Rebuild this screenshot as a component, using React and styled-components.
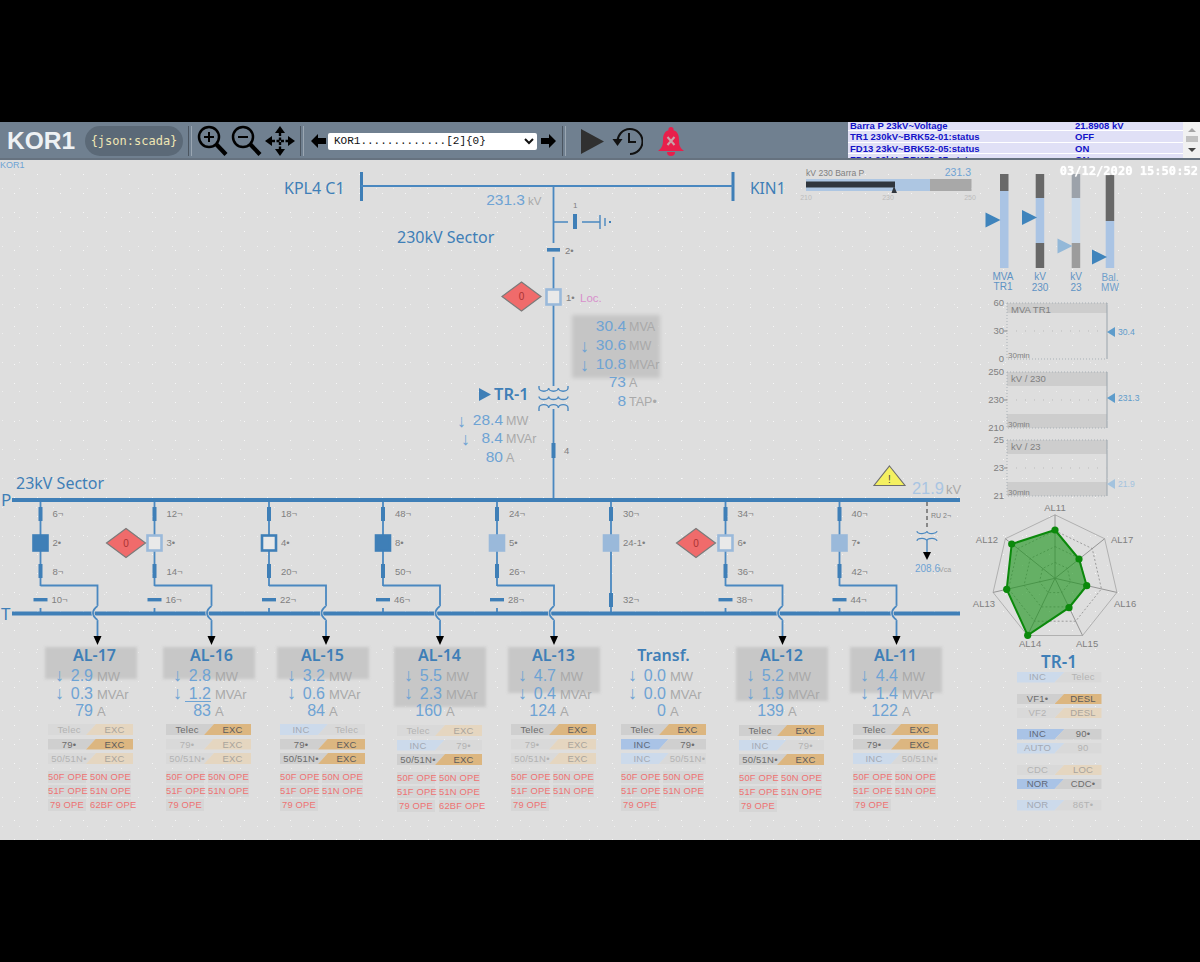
import React from "react"
import styled, { createGlobalStyle } from "styled-components"

const BLUE = "#3f7fb7"
const LINE = "#4a88c0"
const PALE = "#9ab9da"
const NUM = "#6ea3d4"
const GREY = "#a9a9a9"

const Global = createGlobalStyle`
    html, body { margin: 0; padding: 0; background: #000; }
    body { font-family: "Liberation Sans", Arial, sans-serif; }
`

const Page = styled.div`
    width: 1200px;
    height: 962px;
    padding-top: 122px;
    box-sizing: border-box;
    background: #000;
    overflow: hidden;
`
const Screen = styled.div`
    width: 1200px;
    height: 718px;
    display: flex;
    flex-direction: column;
    filter: blur(0.4px);
`

/* toolbar */
const Toolbar = styled.div`
    height: 38px;
    flex: none;
    display: flex;
    align-items: center;
    background: #708090;
    box-shadow: inset 0 -2px 0 #66727f;
`
const Brand = styled.div`
    width: 85px;
    padding-left: 7px;
    box-sizing: border-box;
    color: #eef2f4;
    font-size: 24.5px;
    font-weight: 700;
`
const Pill = styled.div`
    width: 98px;
    height: 30px;
    border-radius: 15px;
    background: #5b6977;
    color: #efe6b4;
    font: 12px "DejaVu Sans Mono", monospace;
    display: flex;
    align-items: center;
    justify-content: center;
`
const Sep = styled.div`
    width: 2px;
    height: 30px;
    margin: 0 ${p => p.$after}px 0 ${p => p.$before}px;
    border-left: 1px solid #4b5560;
    border-right: 1px solid #9aa6b2;
`
const Tool = styled.button`
    flex: none;
    padding: 0;
    border: none;
    background: none;
    display: flex;
    margin-left: ${p => p.$ml || 0}px;
`
const StationSelect = styled.select`
    width: 209px;
    height: 17px;
    margin-left: 2px;
    padding: 0 0 0 2px;
    border: none;
    border-radius: 2px;
    background: #fff;
    color: #111;
    font: 11px "Liberation Mono", monospace;
`
const Events = styled.div`
    margin-left: auto;
    width: 352px;
    height: 36px;
    align-self: flex-start;
    display: flex;
    overflow: hidden;
`
const EventRows = styled.div`
    flex: 1;
    margin-top: -2px;
    background: #fff;
`
const EventRow = styled.div`
    height: 10.3px;
    margin-bottom: 1px;
    padding-left: 2px;
    display: grid;
    grid-template-columns: 225px 1fr;
    align-items: center;
    background: #e0e0f6;
    color: #1313c8;
    font-size: 9.5px;
    font-weight: 700;
    white-space: nowrap;
`
const Scrollbar = styled.div`
    width: 17px;
    flex: none;
    background: #f1f1f1;
    display: flex;
    flex-direction: column;
    align-items: center;
    padding-top: 6px;
    box-sizing: border-box;
`
const ScrollArrow = styled.div`
    width: 0;
    height: 0;
    border-left: 4px solid transparent;
    border-right: 4px solid transparent;
    ${p => p.$down ? "border-top: 4px solid #444;" : "border-bottom: 4px solid #a5a5a5;"}
`
const ScrollThumb = styled.div`
    width: 12px;
    height: 6px;
    margin: 4px 0 6px;
    background: #c1c1c1;
`

/* canvas */
const Canvas = styled.div`
    position: relative;
    flex: 1;
    display: grid;
    grid-template-columns: 960px 240px;
    background-color: #dedede;
    background-image:
        radial-gradient(circle, rgba(255,255,255,.75) .6px, transparent 1px),
        radial-gradient(circle, rgba(255,255,255,.5) .6px, transparent 1px);
    background-size: 23px 19px, 17px 29px;
    background-position: 3px 5px, 11px 14px;
`
const Clock = styled.div`
    position: absolute;
    top: 4px;
    right: 2px;
    color: #fff;
    font: 700 12.1px "DejaVu Sans Mono", monospace;
    text-shadow: 0 0 1px #fff;
`
const Main = styled.div`
    display: flex;
    flex-direction: column;
    min-width: 0;
`
const Side = styled.div`
    display: flex;
    flex-direction: column;
    min-width: 0;
`
const Drawing = styled.svg`
    display: block;
    flex: none;
    overflow: visible;
`

/* svg text */
const Caption = styled.text`
    font-family: "Noto Sans", sans-serif;
    font-size: ${p => p.$size || 15}px;
    font-weight: ${p => p.$weight || 500};
    fill: ${BLUE};
`
const Num = styled.text`
    font-size: ${p => p.$size || 15.5}px;
    fill: ${p => p.$fill || NUM};
    text-anchor: end;
`
const Unit = styled.text`
    font-size: ${p => p.$size || 12.5}px;
    fill: ${GREY};
`
const Small = styled.text`
    font-size: ${p => p.$size || 9.5}px;
    fill: ${p => p.$fill || "#808080"};
    text-anchor: ${p => p.$anchor || "start"};
`

function Measure({ x, y, value, unit, arrow }){
    return(
        <g>
            {arrow !== undefined && <Num x={arrow + 6} y={y + 2} $size={18}>↓</Num>}
            <Num x={x} y={y}>{value}</Num>
            <Unit x={x + 3} y={y}>{unit}</Unit>
        </g>
    )
}

function Trip({ cx, cy }){
    return(
        <g>
            <polygon
                points={`${cx - 19.5},${cy} ${cx},${cy - 14.5} ${cx + 19.5},${cy} ${cx},${cy + 14.5}`}
                fill="#f06b6b" stroke="#7b7b7b" strokeWidth="1.2"
            />
            <Small x={cx} y={cy + 3.5} $anchor="middle" $size={10} $fill="#a33">0</Small>
        </g>
    )
}

function Breaker({ x, y, kind }){
    const filled = kind === "dark" || kind === "light"
    const colour = kind === "dark" || kind === "darkOpen" ? BLUE : PALE
    return <rect
        x={x - 7} y={y - 7.5} width="14" height="15"
        fill={filled ? colour : "#e9e9e9"} stroke={colour} strokeWidth="2.6"
    />
}

const bays = [
    { x: 40.5, top: "6¬", brk: "2•", kind: "dark", low: "8¬", by: "10¬" },
    { x: 154.5, top: "12¬", brk: "3•", kind: "lightOpen", low: "14¬", by: "16¬", trip: 126 },
    { x: 269, top: "18¬", brk: "4•", kind: "darkOpen", low: "20¬", by: "22¬" },
    { x: 383, top: "48¬", brk: "8•", kind: "dark", low: "50¬", by: "46¬" },
    { x: 497, top: "24¬", brk: "5•", kind: "light", low: "26¬", by: "28¬" },
    { x: 611, top: "30¬", brk: "24-1•", kind: "light", low: "32¬" },
    { x: 725.5, top: "34¬", brk: "6•", kind: "lightOpen", low: "36¬", by: "38¬", trip: 696 },
    { x: 839.5, top: "40¬", brk: "7•", kind: "light", low: "42¬", by: "44¬" },
]

function Bay({ bay }){
    const { x, by } = bay
    const out = x + 57
    return(
        <g>
            {by ? (
                <>
                    <path d={`M${x} 500 V586`} stroke={LINE} strokeWidth="1.8" fill="none" />
                    <rect x={x - 7} y={598} width="14" height="3.4" fill={BLUE} />
                    <path d={`M${x} 608 V613`} stroke={LINE} strokeWidth="1.8" />
                    <path d={`M${x} 585.5 H${out} V606 M${out} 620 V637`} stroke={LINE} strokeWidth="1.8" fill="none" />
                    <polygon points={`${out - 4},636 ${out + 4},636 ${out},645`} fill="#000" />
                    <Small x={x + 11} y={603} $size={9.5}>{by}</Small>
                </>
            ) : (
                <>
                    <path d={`M${x} 500 V613`} stroke={LINE} strokeWidth="1.8" />
                    <rect x={x - 2} y={593} width="4" height="14" fill={BLUE} />
                    <Small x={x + 12} y={603}>{bay.low}</Small>
                </>
            )}
            <rect x={x - 2} y={507} width="4" height="14" fill={BLUE} />
            <Breaker x={x} y={543} kind={bay.kind} />
            {by && <rect x={x - 2} y={564} width="4" height="14" fill={BLUE} />}
            <Small x={x + 12} y={517}>{bay.top}</Small>
            <Small x={x + 12} y={546}>{bay.brk}</Small>
            {by && <Small x={x + 12} y={575}>{bay.low}</Small>}
            {bay.trip && <Trip cx={bay.trip} cy={543} />}
        </g>
    )
}

function Diagram(){
    return(
        <Drawing width="960" height="485" viewBox="0 160 960 485">
            <Small x={0} y={168} $size={9} $fill={NUM}>KOR1</Small>

            {/* 230kV side */}
            <rect x="360" y="172" width="3" height="29" fill={BLUE} />
            <rect x="731.5" y="172" width="3" height="29" fill={BLUE} />
            <path d="M361 186 H733" stroke={LINE} strokeWidth="1.8" />
            <Caption x={284} y={194} $size={16} $weight={400}>KPL4 C1</Caption>
            <Caption x={750} y={194} $size={15.5} $weight={400}>KIN1</Caption>
            <Num x={525} y={205} $size={15.5}>231.3</Num>
            <Unit x={528} y={205} $size={11.5}>kV</Unit>
            <Caption x={397} y={243} $size={16} $weight={400}>230kV Sector</Caption>

            <path d="M553.5 186 V243 M553.5 257 V386 M553.5 409 V500" stroke={LINE} strokeWidth="1.8" fill="none" />
            <path d="M553.5 222 H568 M582 222 H600 M600 215 V229 M605 218 V226" stroke={LINE} strokeWidth="1.4" fill="none" />
            <rect x="573" y="214" width="4" height="15" fill={BLUE} />
            <rect x="609" y="221" width="2" height="2" fill={BLUE} />
            <Small x={573} y={208} $size={8}>1</Small>
            <rect x="547" y="248" width="13" height="3.6" fill={BLUE} />
            <Small x={565} y={254}>2•</Small>

            <Breaker x={553.5} y={297} kind="lightOpen" />
            <Trip cx={521.5} cy={296.5} />
            <Small x={566} y={301}>1•</Small>
            <Small x={580} y={302} $size={11.5} $fill="#d890cc">Loc.</Small>

            <rect x="572" y="315" width="88" height="63" fill="#c5c5c5" filter="url(#fuzz)" />
            <Measure x={626} y={331} value="30.4" unit="MVA" />
            <Measure x={626} y={350} value="30.6" unit="MW" arrow={583} />
            <Measure x={626} y={369} value="10.8" unit="MVAr" arrow={583} />
            <Measure x={626} y={387} value="73" unit="A" />
            <Measure x={626} y={406} value="8" unit="TAP•" />

            <path
                d="M539 386 v2 a4.83 3.2 0 0 0 9.67 0 a4.83 3.2 0 0 0 9.67 0 a4.83 3.2 0 0 0 9.67 0 v-2
                   M539 396.5 a4.83 3 0 0 0 9.67 0 a4.83 3 0 0 0 9.67 0 a4.83 3 0 0 0 9.67 0
                   M539 411 v-3 a4.83 3.4 0 0 1 9.67 0 a4.83 3.4 0 0 1 9.67 0 a4.83 3.4 0 0 1 9.67 0 v3"
                stroke={LINE} strokeWidth="1.4" fill="none"
            />
            <polygon points="479,388 491,394.5 479,401" fill={BLUE} />
            <Caption x={494} y={400} $size={16.5} $weight={600}>TR-1</Caption>
            <Measure x={503} y={425} value="28.4" unit="MW" arrow={460} />
            <Measure x={503} y={443} value="8.4" unit="MVAr" arrow={464} />
            <Measure x={503} y={462} value="80" unit="A" />
            <rect x="551.5" y="443" width="4" height="15" fill={BLUE} />
            <Small x={564} y={454}>4</Small>

            {/* 23kV side */}
            <Caption x={16} y={489} $size={16} $weight={400}>23kV Sector</Caption>
            <Caption x={1} y={506} $size={17} $weight={400}>P</Caption>
            <Caption x={1} y={620} $size={17} $weight={400}>T</Caption>
            <polygon points="889.5,466 905,485.5 874,485.5" fill="#f4f061" stroke="#6d6d6d" strokeWidth="1.1" />
            <Small x={889.5} y={483} $anchor="middle" $size={10} $fill="#444">!</Small>
            <Num x={944} y={494} $size={16.5} $fill="#a9c5e2">21.9</Num>
            <Unit x={946} y={494} $size={13}>kV</Unit>

            {bays.map(b => <Bay key={b.x} bay={b} />)}

            <rect x="12" y="498" width="948" height="4" fill={BLUE} />
            <rect x="12" y="611.5" width="948" height="4" fill={BLUE} />
            {/* hops sit over the T bus */}
            {bays.filter(b => b.by).map(b => (
                <path key={b.x} d={`M${b.x + 57} 606 Q${b.x + 48} 613 ${b.x + 57} 620`} stroke="#dedede" strokeWidth="3.2" fill="none" />
            ))}
            {bays.filter(b => b.by).map(b => (
                <path key={b.x} d={`M${b.x + 57} 606 Q${b.x + 48} 613 ${b.x + 57} 620`} stroke={LINE} strokeWidth="1.8" fill="none" />
            ))}

            {/* aux transformer */}
            <path d="M927 502 V530" stroke="#333" strokeWidth="1" strokeDasharray="4 3" />
            <path d="M927 541 V552" stroke={LINE} strokeWidth="1.4" />
            <path
                d="M917 531 a5 2.6 0 0 0 10 0 a5 2.6 0 0 0 10 0 M917 541 a5 2.6 0 0 1 10 0 a5 2.6 0 0 1 10 0"
                stroke={LINE} strokeWidth="1.1" fill="none"
            />
            <polygon points="923,552 931,552 927,560" fill="#000" />
            <Small x={931} y={518} $size={7}>RU 2¬</Small>
            <Small x={915} y={572} $size={10} $fill={NUM}>208.6</Small>
            <Small x={939} y={572} $size={7} $fill="#a0a0a0">Vca</Small>

            {/* horizontal level bar */}
            <Small x={806} y={176} $size={8.6}>kV 230 Barra P</Small>
            <Small x={971} y={176} $anchor="end" $size={10.5} $fill={NUM}>231.3</Small>
            <rect x="806" y="179" width="124" height="12" fill="#adc6e2" />
            <rect x="930" y="179" width="41.5" height="12" fill="#a8a8a8" />
            <rect x="806" y="181.5" width="89" height="6" fill="#30363d" />
            <polygon points="894,186 891.5,193 897,193" fill="#30363d" />
            <Small x={806} y={199.5} $anchor="middle" $size={7} $fill="#bcbcbc">210</Small>
            <Small x={888} y={199.5} $anchor="middle" $size={7} $fill="#bcbcbc">230</Small>
            <Small x={970} y={199.5} $anchor="middle" $size={7} $fill="#bcbcbc">250</Small>

            <defs>
                <filter id="fuzz" x="-10%" y="-10%" width="120%" height="120%">
                    <feGaussianBlur stdDeviation="2" />
                </filter>
            </defs>
        </Drawing>
    )
}

/* feeder cards */
const Feeders = styled.div`
    flex: 1;
    display: flex;
    align-items: flex-start;
    padding-left: 48px;
`
const Card = styled.div`
    position: relative;
    flex: none;
    width: 85px;
    margin-left: ${p => p.$gap}px;
`
const Shade = styled.div`
    position: absolute;
    left: -3px;
    right: -4px;
    top: 2px;
    height: ${p => p.$h}px;
    background: #c7c7c7;
    filter: blur(1.6px);
`
const FeederTitle = styled.div`
    position: relative;
    height: 21px;
    line-height: 21px;
    text-align: center;
    padding-left: ${p => p.$shift * 2}px;
    color: ${BLUE};
    font: 600 16px/21px "Noto Sans", sans-serif;
`
const MeasureRow = styled.div`
    position: relative;
    height: 18px;
    display: grid;
    grid-template-columns: 23px 22px 1fr;
    align-items: baseline;
    column-gap: 0;
    font-size: 16px;
    line-height: 18px;
`
const Arrow = styled.span`
    color: ${NUM};
    font-size: 18px;
    text-align: center;
`
const Val = styled.span`
    color: ${NUM};
    text-align: right;
    white-space: nowrap;
    direction: rtl;
`
const Uom = styled.span`
    color: ${GREY};
    font-size: 13px;
    padding-left: 4px;
`
const Strike = styled.div`
    position: absolute;
    left: 19px;
    top: -1px;
    width: 26px;
    height: 1px;
    background: ${NUM};
`
const Tags = styled.div`
    display: flex;
    flex-direction: column;
    gap: 3.5px;
    margin-top: ${p => 4 + (p.$drop || 0)}px;
`
const tone = {
    grey: ["#cfcfcf", "#6c6c6c"],
    dim: ["#d9d9d9", "#b3b3b3"],
    orange: ["#dcb680", "#5c5c5c"],
    peach: ["#e5d6c0", "#a9a49c"],
    blue: ["#a9c3e6", "#5f6878"],
    pale: ["#ccdaeb", "#a3a9b3"],
}
const Pair = styled.div`
    display: flex;
    height: ${p => p.$h || 11}px;
    width: 85px;
    font-size: 9.5px;
    letter-spacing: .2px;
    line-height: ${p => p.$h || 11}px;
`
const Half = styled.span`
    display: block;
    text-align: center;
    white-space: nowrap;
    background: ${p => tone[p.$tone][0]};
    color: ${p => tone[p.$tone][1]};
`
const LeftHalf = styled(Half)`
    flex: 0 0 48px;
    padding-right: 6px;
    box-sizing: border-box;
    clip-path: polygon(0 0, 100% 0, 38px 100%, 0 100%);
`
const RightHalf = styled(Half)`
    flex: 1;
    margin-left: -10px;
    padding-left: 10px;
    box-sizing: border-box;
    clip-path: polygon(10px 0, 100% 0, 100% 100%, 0 100%);
`
const Protections = styled.div`
    display: grid;
    grid-template-columns: 38px 41px;
    column-gap: 4px;
    row-gap: 2.5px;
    margin-top: 7px;
`
const Trip51 = styled.span`
    height: 11.5px;
    line-height: 11.5px;
    text-align: center;
    white-space: nowrap;
    background: #d6d6d6;
    color: #ee7272;
    font-size: 9.4px;
    letter-spacing: .2px;
`

const T = (l, lt, r, rt) => ({ l, lt, r, rt })
const A = T("Telec", "grey", "EXC", "orange")
const AD = T("Telec", "dim", "EXC", "peach")
const R = T("79•", "grey", "EXC", "orange")
const RD = T("79•", "dim", "EXC", "peach")
const N = T("50/51N•", "grey", "EXC", "orange")
const ND = T("50/51N•", "dim", "EXC", "peach")
const INC79 = T("INC", "pale", "79•", "dim")
const INCN = T("INC", "pale", "50/51N•", "dim")

const feeders = [
    { name: "AL-17", gap: 0, shift: 4, shade: 32, mw: "2.9", mvar: "0.3", a: "79", tags: [AD, R, ND], bf: true },
    { name: "AL-16", gap: 33, shift: 3, shade: 32, mw: "2.8", mvar: "1.2", a: "83", tags: [A, RD, ND], strike: true },
    { name: "AL-15", gap: 29, shift: 0, shade: 32, mw: "3.2", mvar: "0.6", a: "84", tags: [T("INC", "pale", "Telec", "dim"), R, N] },
    { name: "AL-14", gap: 32, shift: 0, shade: 60, mw: "5.5", mvar: "2.3", a: "160", tags: [AD, INC79, N], bf: true, drop: 1 },
    { name: "AL-13", gap: 29, shift: 0, shade: 46, mw: "4.7", mvar: "0.4", a: "124", tags: [A, RD, ND] },
    { name: "Transf.", gap: 25, shift: 0, shade: 0, mw: "0.0", mvar: "0.0", a: "0", tags: [A, T("INC", "blue", "79•", "grey"), INCN] },
    { name: "AL-12", gap: 33, shift: 0, shade: 54, mw: "5.2", mvar: "1.9", a: "139", tags: [A, INC79, N], drop: 1 },
    { name: "AL-11", gap: 29, shift: 0, shade: 46, mw: "4.4", mvar: "1.4", a: "122", tags: [A, R, INCN] },
]

function TagPair({ tag, h }){
    return(
        <Pair $h={h}>
            <LeftHalf $tone={tag.lt}>{tag.l}</LeftHalf>
            <RightHalf $tone={tag.rt}>{tag.r}</RightHalf>
        </Pair>
    )
}

function FeederCard({ f }){
    return(
        <Card $gap={f.gap}>
            {f.shade > 0 && <Shade $h={f.shade} />}
            <FeederTitle $shift={f.shift}>{f.name}</FeederTitle>
            <MeasureRow><Arrow>↓</Arrow><Val>{f.mw}</Val><Uom>MW</Uom></MeasureRow>
            <MeasureRow><Arrow>↓</Arrow><Val>{f.mvar}</Val><Uom>MVAr</Uom></MeasureRow>
            <MeasureRow>
                {f.strike && <Strike />}
                <span /><Val>{f.a}</Val><Uom>A</Uom>
            </MeasureRow>
            <Tags $drop={f.drop}>
                {f.tags.map((t, i) => <TagPair key={i} tag={t} />)}
            </Tags>
            <Protections>
                <Trip51>50F OPE</Trip51><Trip51>50N OPE</Trip51>
                <Trip51>51F OPE</Trip51><Trip51>51N OPE</Trip51>
                <Trip51>79 OPE</Trip51>
                {f.bf && <Trip51>62BF OPE</Trip51>}
            </Protections>
        </Card>
    )
}

/* side panels */
function Gauges(){
    const gauge = (x, parts) => parts.map(([y, h, fill]) => (
        <rect key={x + "-" + y} x={x} y={y} width="8.5" height={h} fill={fill} />
    ))
    const pointer = (x, y, fill) => <polygon points={`${x},${y - 7.5} ${x + 15},${y} ${x},${y + 7.5}`} fill={fill} />
    return(
        <Drawing width="240" height="139" viewBox="960 160 240 139">
            {gauge(1000, [[174, 17, "#686868"], [191, 77, "#aac4e4"]])}
            {gauge(1035.7, [[174, 24, "#686868"], [198, 45, "#aac4e4"], [243, 25, "#686868"]])}
            {gauge(1071.7, [[174, 24, "#9ca2aa"], [198, 45, "#cbdaea"], [243, 25, "#9c9c9c"]])}
            {gauge(1105.7, [[175, 46, "#686868"], [221, 47, "#aac4e4"]])}
            {pointer(985.5, 220, "#3f84bc")}
            {pointer(1022, 217.5, "#3f84bc")}
            {pointer(1057.5, 246, "#93b8d8")}
            {pointer(1092, 257, "#3f84bc")}
            <Small x={1003} y={280} $anchor="middle" $size={10} $fill="#5f93c4">MVA</Small>
            <Small x={1003} y={290} $anchor="middle" $size={10} $fill="#5f93c4">TR1</Small>
            <Small x={1040} y={280} $anchor="middle" $size={10} $fill="#5f93c4">kV</Small>
            <Small x={1040} y={291} $anchor="middle" $size={10} $fill="#5f93c4">230</Small>
            <Small x={1076} y={280} $anchor="middle" $size={10} $fill="#5f93c4">kV</Small>
            <Small x={1076} y={291} $anchor="middle" $size={10} $fill="#5f93c4">23</Small>
            <Small x={1110} y={281} $anchor="middle" $size={10} $fill="#6f9ecb">Bal.</Small>
            <Small x={1110} y={291} $anchor="middle" $size={10} $fill="#6f9ecb">MW</Small>
        </Drawing>
    )
}

function TrendChart({ ticks, label, top, bottom, value, level, faded, height = 68 }){
    const [t, b] = [4, 60]
    const colour = faded ? "#a4c3de" : "#5e9ccb"
    return(
        <Drawing width="240" height={height} viewBox={`0 0 240 ${height}`}>
            <rect x="47" y={t} width="100" height={top} fill="#cdcdcd" />
            {bottom > 0 && <rect x="47" y={b - bottom} width="100" height={bottom} fill="#cdcdcd" />}
            <path d={`M47 ${t} V${b} H147 M47 ${t} H147`} stroke="#a9b1b7" strokeDasharray="1 2" fill="none" />
            <path d={`M147 ${t} V${b}`} stroke="#9aa4ac" fill="none" />
            <path d={`M47 ${(t + b) / 2} H147`} stroke="#bbbbbb" strokeDasharray="1 8" fill="none" />
            <path d={`M44 ${(t + b) / 2} H47`} stroke="#888" />
            <Small x={44} y={t + 3} $anchor="end" $size={9.5}>{ticks[0]}</Small>
            <Small x={44} y={(t + b) / 2 + 3} $anchor="end" $size={9.5}>{ticks[1]}</Small>
            <Small x={44} y={b + 3} $anchor="end" $size={9.5}>{ticks[2]}</Small>
            <Small x={51} y={t + 10} $size={9.5}>{label}</Small>
            <Small x={48} y={b - 1.5} $size={8}>30min</Small>
            <polygon points={`147,${level} 155,${level - 5} 155,${level + 5}`} fill={colour} />
            <Small x={158} y={level + 3} $size={8.6} $fill={colour}>{value}</Small>
        </Drawing>
    )
}

const radarNames = ["AL11", "AL17", "AL16", "AL15", "AL14", "AL13", "AL12"]
const radarData = [[1055, 530], [1079, 559], [1086.7, 585.7], [1069, 607.7], [1027.7, 635.3], [1006.7, 589.3], [1011.7, 544]]
const radarLabels = [[1055, 511, "middle"], [1111, 542.7, "start"], [1114, 606.7, "start"], [1076, 646.7, "start"], [1019, 646.7, "start"], [995, 606.7, "end"], [998, 542.7, "end"]]

function Radar(){
    const cx = 1055, cy = 578.3, R = 63.5
    const ring = k => radarNames.map((_, i) => {
        const a = -Math.PI / 2 + i * 2 * Math.PI / 7
        return `${cx + R * k * Math.cos(a)},${cy + R * k * Math.sin(a)}`
    })
    const outer = ring(1)
    return(
        <Drawing width="240" height="148" viewBox="960 504 240 148">
            <polygon points={outer.join(" ")} fill="none" stroke="#b0b0b0" strokeWidth="1" />
            {[0.25, 0.5, 0.75].map(k => (
                <polygon key={k} points={ring(k).join(" ")} fill="none" stroke="#8c8c8c" strokeWidth=".8" strokeDasharray="2 2" />
            ))}
            {outer.map((p, i) => <line key={i} x1={cx} y1={cy} x2={p.split(",")[0]} y2={p.split(",")[1]} stroke="#8c8c8c" strokeWidth=".9" />)}
            <polygon
                points={radarData.map(p => p.join(",")).join(" ")}
                fill="rgba(28,148,28,.62)" stroke="#0b890b" strokeWidth="2"
            />
            {radarData.map(p => <circle key={p[0]} cx={p[0]} cy={p[1]} r="3.6" fill="#0b890b" />)}
            {radarLabels.map((l, i) => (
                <Small key={i} x={l[0]} y={l[1]} $anchor={l[2]} $size={9.5}>{radarNames[i]}</Small>
            ))}
        </Drawing>
    )
}

const TrPanel = styled.div`
    width: 85px;
    margin-left: 56.5px;
    display: flex;
    flex-direction: column;
`
const TrTitle = styled.div`
    height: 20px;
    width: 85px;
    text-align: center;
    color: ${BLUE};
    font: 600 17px/20px "Noto Sans", sans-serif;
`
const TrGroup = styled.div`
    display: flex;
    flex-direction: column;
    gap: 3.5px;
    margin-bottom: 11px;
`

const trGroups = [
    [T("INC", "pale", "Telec", "dim")],
    [T("VF1•", "grey", "DESL", "orange"), T("VF2", "dim", "DESL", "peach")],
    [T("INC", "blue", "90•", "grey"), T("AUTO", "pale", "90", "dim")],
    [T("CDC", "dim", "LOC", "peach"), T("NOR", "blue", "CDC•", "grey")],
    [T("NOR", "pale", "86T•", "dim")],
]

const eventRows = [
    ["Barra P 23kV~Voltage", "21.8908 kV"],
    ["TR1 230kV~BRK52-01:status", "OFF"],
    ["FD13 23kV~BRK52-05:status", "ON"],
    ["FD11 23kV~BRK52-07:status", "ON"],
]

function ZoomIcon({ minus }){
    return(
        <svg width="31" height="32" viewBox="0 0 31 32">
            <circle cx="12" cy="12" r="10" fill="none" stroke="#000" strokeWidth="2.5" />
            <path d={minus ? "M7 12 H17" : "M7 12 H17 M12 7 V17"} stroke="#000" strokeWidth="2" />
            <path d="M19.5 19.5 L29 29.5" stroke="#000" strokeWidth="4.2" />
        </svg>
    )
}
function MoveIcon(){
    return(
        <svg width="32" height="32" viewBox="0 0 32 32">
            <polygon points="16,1 21,8 11,8" fill="#000" />
            <polygon points="16,31 21,24 11,24" fill="#000" />
            <polygon points="1,16 8,11 8,21" fill="#000" />
            <polygon points="31,16 24,11 24,21" fill="#000" />
            <path d="M16 8 V24 M8 16 H24" stroke="#000" strokeWidth="2.4" strokeDasharray="3 1.5" />
        </svg>
    )
}
function SideArrow({ right }){
    return(
        <svg width="15" height="14" viewBox="0 0 15 14">
            <polygon points={right ? "15,7 8,0 8,4 0,4 0,10 8,10 8,14" : "0,7 7,0 7,4 15,4 15,10 7,10 7,14"} fill="#000" />
        </svg>
    )
}
function HistoryIcon(){
    return(
        <svg width="31" height="30" viewBox="0 0 31 30">
            <path d="M5.5 16 A12.5 12.5 0 1 1 18 28" fill="none" stroke="#111" strokeWidth="2" />
            <polygon points="0.5,13 10.5,13 5.5,20" fill="#111" />
            <path d="M17 7 V16 H24" fill="none" stroke="#111" strokeWidth="2" />
        </svg>
    )
}
function BellIcon(){
    return(
        <svg width="30" height="31" viewBox="0 0 30 31">
            <circle cx="15" cy="3.5" r="2.6" fill="#e81f4b" />
            <path d="M15 4 C8.5 4 7 9 7 14 C7 19 6 22 2 25 H28 C24 22 23 19 23 14 C23 9 21.5 4 15 4 Z" fill="#e81f4b" />
            <path d="M11 26 A4 4 0 0 0 19 26 Z" fill="#e81f4b" />
            <path d="M11.5 11 L18.5 19 M18.5 11 L11.5 19" stroke="#c9a3a9" strokeWidth="2" />
        </svg>
    )
}

export default function App(){
    return(
        <Page>
            <Global />
            <Screen>
                <Toolbar>
                    <Brand>KOR1</Brand>
                    <Pill>{"{json:scada}"}</Pill>
                    <Sep $before={5} $after={5} />
                    <Tool><ZoomIcon /></Tool>
                    <Tool $ml={3}><ZoomIcon minus /></Tool>
                    <Tool $ml={2}><MoveIcon /></Tool>
                    <Sep $before={4} $after={7} />
                    <Tool><SideArrow /></Tool>
                    <StationSelect defaultValue="kor1" aria-label="display">
                        <option value="kor1">KOR1.............[2]{"{0}"}</option>
                    </StationSelect>
                    <Tool $ml={4}><SideArrow right /></Tool>
                    <Sep $before={6} $after={15} />
                    <Tool>
                        <svg width="23" height="25" viewBox="0 0 23 25"><polygon points="0,0 23,12.5 0,25" fill="#303030" /></svg>
                    </Tool>
                    <Tool $ml={8}><HistoryIcon /></Tool>
                    <Tool $ml={13}><BellIcon /></Tool>
                    <Events>
                        <EventRows>
                            {eventRows.map(r => (
                                <EventRow key={r[0]}><span>{r[0]}</span><span>{r[1]}</span></EventRow>
                            ))}
                        </EventRows>
                        <Scrollbar>
                            <ScrollArrow />
                            <ScrollThumb />
                            <ScrollArrow $down />
                        </Scrollbar>
                    </Events>
                </Toolbar>
                <Canvas>
                    <Main>
                        <Diagram />
                        <Feeders>
                            {feeders.map(f => <FeederCard key={f.name} f={f} />)}
                        </Feeders>
                    </Main>
                    <Side>
                        <Gauges />
                        <TrendChart ticks={[60, 30, 0]} label="MVA TR1" top={10} bottom={0} value="30.4" level={33} height={69} />
                        <TrendChart ticks={[250, 230, 210]} label="kV / 230" top={14} bottom={14} value="231.3" level={30} />
                        <TrendChart ticks={[25, 23, 21]} label="kV / 23" top={14} bottom={14} value="21.9" level={48} faded />
                        <Radar />
                        <TrPanel>
                            <TrTitle>TR-1</TrTitle>
                            {trGroups.map((g, i) => (
                                <TrGroup key={i}>
                                    {g.map((t, k) => <TagPair key={k} tag={t} h={10.5} />)}
                                </TrGroup>
                            ))}
                        </TrPanel>
                    </Side>
                    <Clock>03/12/2020 15:50:52</Clock>
                </Canvas>
            </Screen>
        </Page>
    )
}
